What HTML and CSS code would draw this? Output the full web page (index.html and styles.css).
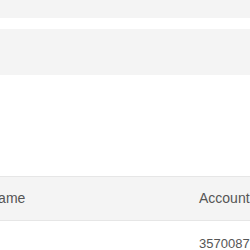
FILE: index.html
```html
<!DOCTYPE html>
<html lang="en">
<head>
    <meta charset="UTF-8">
    <meta name="viewport" content="width=device-width, initial-scale=1.0">
    <title>Accounts</title>
    <link rel="stylesheet" href="styles.css">
</head>
<body>
    <div class="topbar"></div>
    <div class="filters"></div>

    <table class="accounts">
        <thead>
            <tr>
                <th class="col-name">Name</th>
                <th class="col-account">Account</th>
            </tr>
        </thead>
        <tbody>
            <tr>
                <td class="col-name"></td>
                <td class="col-account">3570087</td>
            </tr>
        </tbody>
    </table>
</body>
</html>
```

FILE: styles.css
```css
html, body {
    overflow: hidden;
}

body {
    margin: 0;
    background-color: #fff;
    font-family: "Liberation Sans", Arial, sans-serif;
    color: #555;
}

.topbar {
    height: 18px;
    background-color: #f4f4f4;
    margin-bottom: 11px;
}

.filters {
    height: 46px;
    background-color: #f4f4f4;
    margin-bottom: 101px;
}

.accounts {
    border-collapse: collapse;
    table-layout: fixed;
    width: 400px;
    margin-left: -20px;
}

.accounts th {
    font-size: 14px;
    font-weight: normal;
    line-height: 20px;
    text-align: left;
    padding: 11px 8px 12px;
    background-color: #f4f4f4;
    border-top: 1px solid #e6e6e6;
    border-bottom: 1px solid #e6e6e6;
}

.accounts td {
    font-size: 13px;
    line-height: 18px;
    padding: 14px 8px 8px;
}

.col-name {
    width: 211px;
    box-sizing: border-box;
}
```
